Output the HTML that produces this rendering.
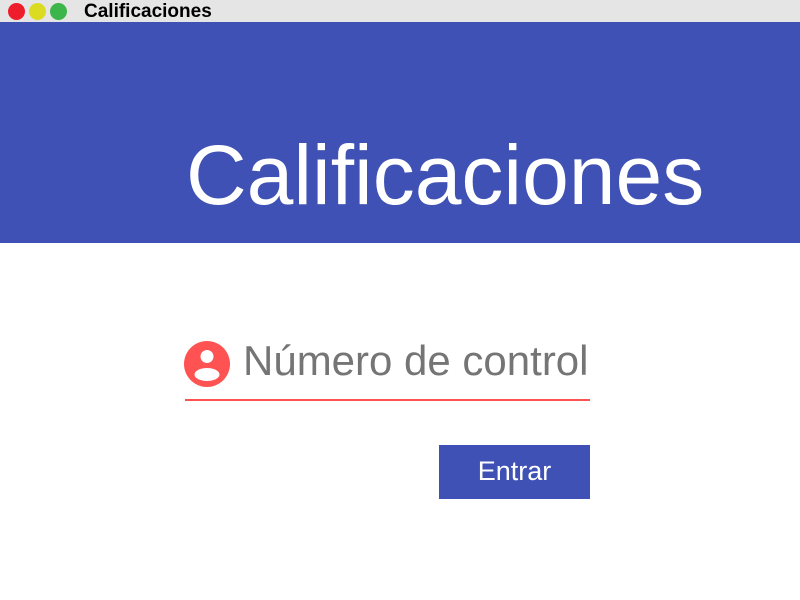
<!DOCTYPE html>
<html><head><meta charset="utf-8"><style>
*{margin:0;padding:0;box-sizing:border-box}
body{width:800px;height:600px;overflow:hidden;background:#fff;font-family:"Liberation Sans",Arial,sans-serif;position:relative}
.bar{position:absolute;left:0;top:0;width:800px;height:22px;background:#e5e5e5}
.dot{position:absolute;top:3px;width:17px;height:17px;border-radius:50%}
.t{position:absolute;left:84px;top:1px;font-size:19px;font-weight:bold;line-height:22px;color:#000}
.hd{position:absolute;left:0;top:22px;width:800px;height:221px;background:#3f51b5}
.h1{position:absolute;left:186px;top:175px;font-size:84px;color:#fff;line-height:0;white-space:nowrap}
.inp{position:absolute;left:243px;top:361px;font-size:42px;color:#757575;line-height:0;white-space:nowrap}
.ul{position:absolute;left:185px;top:399px;width:405px;height:2px;background:#ff5252}
.btn{position:absolute;left:439px;top:445px;width:151px;height:54px;background:#3f51b5;color:#fff;font-size:27px;text-align:center;line-height:52px}
</style></head><body>
<div class="bar">
<div class="dot" style="left:8px;background:#ee1d2b"></div>
<div class="dot" style="left:29px;background:#dbdb22"></div>
<div class="dot" style="left:50px;background:#3cb54a"></div>
<div class="t">Calificaciones</div>
</div>
<div class="hd"></div>
<div class="h1">Calificaciones</div>
<svg style="position:absolute;left:184px;top:341px" width="46" height="46" viewBox="0 0 46 46">
<circle cx="23" cy="23" r="23" fill="#ff5252"/>
<circle cx="23" cy="15.5" r="6.5" fill="#fff"/>
<ellipse cx="23" cy="33.5" rx="12.5" ry="6.5" fill="#fff"/>
</svg>
<div class="inp">Número de control</div>
<div class="ul"></div>
<div class="btn">Entrar</div>
</body></html>
